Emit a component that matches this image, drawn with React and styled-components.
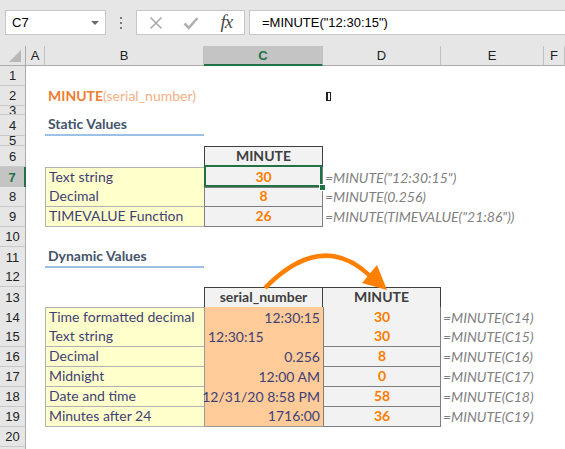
import React from "react";
import styled, { createGlobalStyle, css } from "styled-components";

const GlobalStyle = createGlobalStyle`
  html, body {
    margin: 0;
    padding: 0;
    background: #fff;
  }
  body {
    font-family: "Liberation Sans", Arial, sans-serif;
  }
`;

const COLS = ["A", "B", "C", "D", "E", "F"];
const TEMPLATE = "26px 19px 159px 119px 118px 103px 1fr";
const GREEN = "#217346";

const Window = styled.div`
  position: relative;
  width: 565px;
  height: 449px;
  overflow: hidden;
  background: #fff;
`;

const FormulaBar = styled.div`
  display: flex;
  align-items: flex-start;
  box-sizing: border-box;
  height: 46px;
  padding: 10px 0 0 5px;
  background: #e6e6e6;
`;

const Box = styled.div`
  box-sizing: border-box;
  height: 25px;
  background: #fff;
  border: 1px solid #c6c6c6;
  display: flex;
  align-items: center;
  font-size: 13px;
  color: #000;
`;

const NameBox = styled(Box)`
  width: 101px;
  justify-content: space-between;
  padding: 0 6px 0 6px;
`;

const Caret = styled.span`
  width: 0;
  height: 0;
  border-left: 4px solid transparent;
  border-right: 4px solid transparent;
  border-top: 4px solid #6a6a6a;
`;

const Dots = styled.div`
  display: flex;
  flex-direction: column;
  gap: 3px;
  margin: 7px 0 0 14px;

  span {
    width: 2px;
    height: 2px;
    background: #7a7a7a;
  }
`;

const FxBox = styled(Box)`
  width: 109px;
  margin-left: 14px;
  padding-left: 1px;
`;

const IconSlot = styled.div`
  width: 36px;
  display: flex;
  justify-content: center;
  align-items: center;
`;

const FxGlyph = styled.span`
  font-family: "Liberation Serif", "Times New Roman", serif;
  font-style: italic;
  font-size: 19px;
  color: #4a4a4a;
  letter-spacing: -1px;
  line-height: 1;
  margin-top: -2px;
`;

const FormulaInput = styled(Box)`
  flex: 1;
  margin-left: 4px;
  padding-left: 12px;
  border-right: none;
`;

const Sheet = styled.div`
  display: flex;
  flex-direction: column;
`;

const Row = styled.div`
  display: grid;
  grid-template-columns: ${TEMPLATE};
  height: ${(p) => p.$h}px;
`;

const Corner = styled.div`
  position: relative;
  background: #e6e6e6;
  border-right: 1px solid #ababab;
  border-bottom: 1px solid #ababab;

  &::after {
    content: "";
    position: absolute;
    right: 4px;
    bottom: 3px;
    border-left: 12px solid transparent;
    border-bottom: 12px solid #b8b8b8;
  }
`;

const ColHeader = styled.div`
  box-sizing: border-box;
  display: flex;
  align-items: center;
  justify-content: center;
  background: ${(p) => (p.$active ? "#c4c4c4" : "#e6e6e6")};
  border-right: 1px solid #c0c0c0;
  border-bottom: ${(p) => (p.$active ? `2px solid ${GREEN}` : "1px solid #ababab")};
  color: ${(p) => (p.$active ? GREEN : "#222")};
  font-weight: ${(p) => (p.$active ? 700 : 400)};
  font-size: 13px;
  padding-top: ${(p) => (p.$active ? 1 : 0)}px;
`;

const RowNum = styled.div`
  box-sizing: border-box;
  display: flex;
  align-items: center;
  justify-content: center;
  overflow: hidden;
  background: ${(p) => (p.$active ? "#c4c4c4" : "#e6e6e6")};
  border-bottom: 1px solid #c9c9c9;
  border-right: ${(p) => (p.$active ? `2px solid ${GREEN}` : "1px solid #ababab")};
  color: ${(p) => (p.$active ? GREEN : "#222")};
  font-weight: ${(p) => (p.$active ? 700 : 400)};
  font-size: 13px;
`;

const edge = (p, side) =>
  (p.$edges || "").includes(side) ? `1px solid ${p.$line || "#b2b2b2"}` : "none";

const kinds = {
  note: css`
    background: #ffffcc;
    color: #3f3f76;
  `,
  input: css`
    background: #ffcc99;
    color: #3f3f76;
  `,
  calc: css`
    background: #f2f2f2;
    color: #fa7d00;
    font-weight: 700;
  `,
  output: css`
    background: #f2f2f2;
    color: #3f3f3f;
    font-weight: 700;
  `,
  explain: css`
    color: #7f7f7f;
    font-style: italic;
    padding-left: 2px;
  `,
  heading: css`
    color: #44546a;
    font-weight: 700;
    border-bottom: 2px solid #9bc2e6;
  `,
};

const Cell = styled.div`
  grid-column: ${(p) => COLS.indexOf(p.$col) + 2};
  grid-row: 1;
  box-sizing: border-box;
  display: flex;
  align-items: flex-end;
  justify-content: ${(p) =>
    p.$align === "right" ? "flex-end" : p.$align === "center" ? "center" : "flex-start"};
  padding: 0 3px 2px 3px;
  white-space: nowrap;
  font-family: Lato, "Liberation Sans", sans-serif;
  font-size: 14px;
  line-height: 17px;
  border-top: ${(p) => edge(p, "t")};
  border-right: ${(p) => edge(p, "r")};
  border-bottom: ${(p) => edge(p, "b")};
  border-left: ${(p) => edge(p, "l")};
  ${(p) => kinds[p.$kind]}
  ${(p) =>
    p.$selected &&
    css`
      position: relative;
      &::after {
        content: "";
        position: absolute;
        inset: -2px 0 0 -1px;
        border: 2px solid ${GREEN};
        z-index: 2;
      }
      &::before {
        content: "";
        position: absolute;
        right: -4px;
        bottom: -4px;
        width: 5px;
        height: 5px;
        background: ${GREEN};
        border: 1px solid #fff;
        z-index: 3;
      }
    `}
`;

const Strong = styled.span`
  color: #ed7d31;
  font-weight: 700;
`;

const Soft = styled.span`
  color: #f4b084;
`;

const Marker = styled.span`
  display: inline-block;
  width: 2px;
  height: 7px;
  border: 1px solid #222;
  border-left-width: 2px;
  margin: 0 0 3px 0;
`;

const Overlay = styled.svg`
  position: absolute;
  left: 0;
  top: 0;
  pointer-events: none;
`;

function SheetRow({ n, h = 20, active, children }) {
  return (
    <Row $h={h}>
      <RowNum $active={active}>{n}</RowNum>
      {children}
    </Row>
  );
}

const staticRows = [
  { n: 7, label: "Text string", value: "30", formula: '=MINUTE("12:30:15")' },
  { n: 8, label: "Decimal", value: "8", formula: "=MINUTE(0.256)" },
  { n: 9, label: "TIMEVALUE Function", value: "26", formula: '=MINUTE(TIMEVALUE("21:86"))' },
];

const dynamicRows = [
  { n: 14, label: "Time formatted decimal", serial: "12:30:15", value: "30" },
  { n: 15, label: "Text string", serial: "12:30:15", left: true, value: "30" },
  { n: 16, label: "Decimal", serial: "0.256", value: "8" },
  { n: 17, label: "Midnight", serial: "12:00 AM", value: "0" },
  { n: 18, label: "Date and time", serial: "12/31/20 8:58 PM", value: "58" },
  { n: 19, label: "Minutes after 24", serial: "1716:00", value: "36" },
];

export default function App() {
  return (
    <Window>
      <GlobalStyle />
      <FormulaBar>
        <NameBox>
          <span>C7</span>
          <Caret />
        </NameBox>
        <Dots>
          <span />
          <span />
          <span />
        </Dots>
        <FxBox>
          <IconSlot>
            <svg width="14" height="14" viewBox="0 0 14 14">
              <path d="M1.5 1.5 L12.5 12.5 M12.5 1.5 L1.5 12.5" stroke="#a8a8a8" strokeWidth="1.5" fill="none" />
            </svg>
          </IconSlot>
          <IconSlot>
            <svg width="16" height="14" viewBox="0 0 16 14">
              <path d="M1.5 7.5 L5.8 11.8 L14.5 2" stroke="#b0b0b0" strokeWidth="2.6" fill="none" />
            </svg>
          </IconSlot>
          <IconSlot>
            <FxGlyph>fx</FxGlyph>
          </IconSlot>
        </FxBox>
        <FormulaInput>=MINUTE("12:30:15")</FormulaInput>
      </FormulaBar>

      <Sheet>
        <Row $h={20}>
          <Corner />
          {COLS.map((c) => (
            <ColHeader key={c} $active={c === "C"}>
              {c}
            </ColHeader>
          ))}
        </Row>

        <SheetRow n={1} />
        <SheetRow n={2}>
          <Cell $col="B">
            <Strong>MINUTE</Strong>
            <Soft>(serial_number)</Soft>
          </Cell>
          <Cell $col="D">
            <Marker />
          </Cell>
        </SheetRow>
        <SheetRow n={3} h={9} />
        <SheetRow n={4} h={21}>
          <Cell $col="B" $kind="heading">
            Static Values
          </Cell>
        </SheetRow>
        <SheetRow n={5} h={10} />
        <SheetRow n={6} h={21}>
          <Cell $col="C" $kind="output" $align="center" $edges="tlrb" $line="#3f3f3f">
            MINUTE
          </Cell>
        </SheetRow>
        {staticRows.map((r, i) => (
          <SheetRow key={r.n} n={r.n} active={r.n === 7}>
            <Cell $col="B" $kind="note" $edges={i === 0 ? "tlb" : "lb"}>
              {r.label}
            </Cell>
            <Cell
              $col="C"
              $kind="calc"
              $align="center"
              $edges="lrb"
              $line="#7f7f7f"
              $selected={r.n === 7}
            >
              {r.value}
            </Cell>
            <Cell $col="D" $kind="explain">
              {r.formula}
            </Cell>
          </SheetRow>
        ))}
        <SheetRow n={10} />
        <SheetRow n={11}>
          <Cell $col="B" $kind="heading">
            Dynamic Values
          </Cell>
        </SheetRow>
        <SheetRow n={12} />
        <SheetRow n={13}>
          <Cell $col="C" $kind="output" $align="center" $edges="tlrb" $line="#3f3f3f">
            serial_number
          </Cell>
          <Cell $col="D" $kind="output" $align="center" $edges="trb" $line="#3f3f3f">
            MINUTE
          </Cell>
        </SheetRow>
        {dynamicRows.map((r, i) => (
          <SheetRow key={r.n} n={r.n}>
            <Cell $col="B" $kind="note" $edges={i === 0 ? "tlb" : "lb"}>
              {r.label}
            </Cell>
            <Cell
              $col="C"
              $kind="input"
              $align={r.left ? "left" : "right"}
              $edges={i === dynamicRows.length - 1 ? "lb" : "l"}
              $line="#9a9a9a"
            >
              {r.serial}
            </Cell>
            <Cell $col="D" $kind="calc" $align="center" $edges="lrb" $line="#7f7f7f">
              {r.value}
            </Cell>
            <Cell $col="E" $kind="explain">
              =MINUTE(C{r.n})
            </Cell>
          </SheetRow>
        ))}
        <SheetRow n={20} />
        <SheetRow n="" />
      </Sheet>

      <Overlay width="565" height="449" viewBox="0 0 565 449">
        <path d="M265 288 Q322 230 370 276" stroke="#ff8000" strokeWidth="4.5" fill="none" />
        <polygon points="362,283 377,265 387,290" fill="#ff8000" />
      </Overlay>
    </Window>
  );
}
